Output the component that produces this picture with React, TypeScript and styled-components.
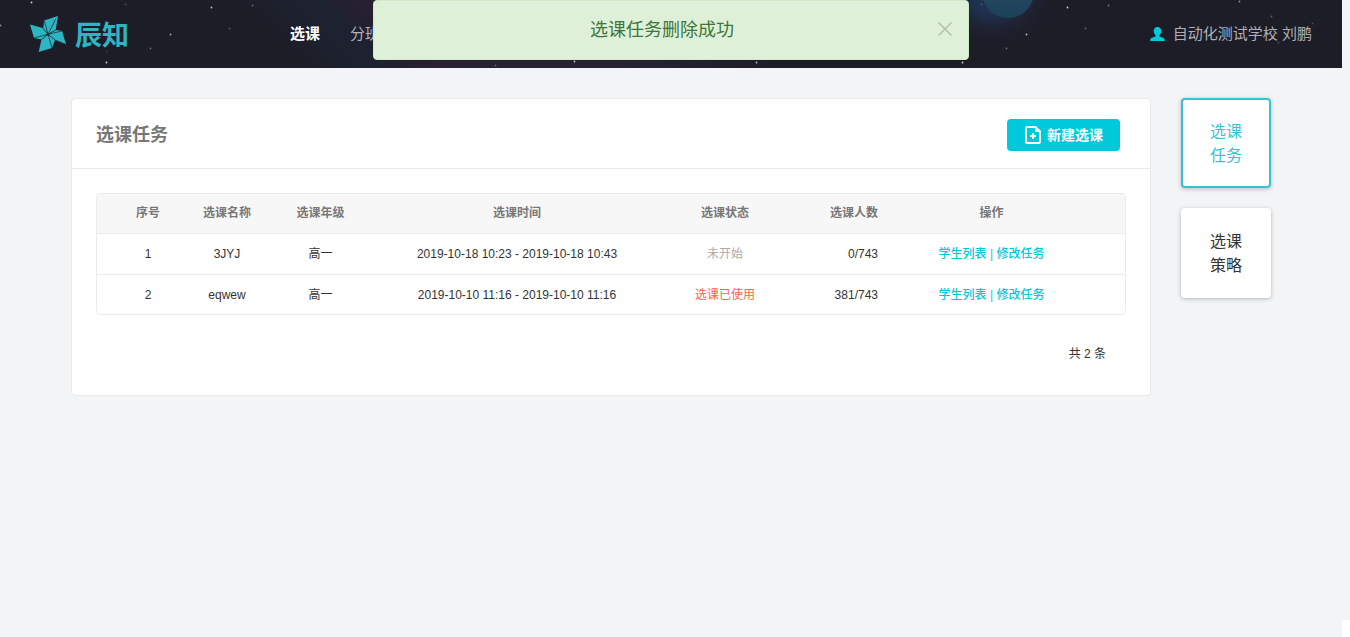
import React, { useState } from "react";
import styled, { createGlobalStyle } from "styled-components";

const GlobalStyle = createGlobalStyle`
  *, *::before, *::after { box-sizing: border-box; }
  body {
    margin: 0;
    background: #f3f4f6;
    color: #333;
    font-family: "Liberation Sans", "Noto Sans CJK SC", sans-serif;
    font-size: 12px;
  }
  button { font-family: inherit; cursor: pointer; }
  a { color: inherit; text-decoration: none; }
`;

const Shell = styled.div`
  position: relative;
  min-height: 100vh;
  padding-right: 8px;
  background: #f3f4f6;
`;

const ScrollCorner = styled.div`
  position: fixed;
  right: 0;
  bottom: 0;
  width: 8px;
  height: 17px;
  background: #fff;
`;

const Header = styled.header`
  position: relative;
  display: flex;
  align-items: center;
  height: 68px;
  padding: 0 30px;
  background: #1d1d28;
  overflow: hidden;
`;

const Sky = styled.svg`
  position: absolute;
  top: 0;
  left: 0;
`;

const Logo = styled.a`
  position: relative;
  display: flex;
  align-items: center;
  gap: 8px;
  width: 260px;
  color: #2db5c2;
`;

const LogoText = styled.span`
  padding-top: 4px;
  font-size: 27px;
  font-weight: 700;
  line-height: 36px;
`;

const Nav = styled.nav`
  position: relative;
  display: flex;
  flex: 1;
  gap: 30px;
`;

const NavLink = styled.a<{ $active?: boolean }>`
  color: ${(p) => (p.$active ? "#fff" : "#b4b4b9")};
  font-size: 15px;
  font-weight: ${(p) => (p.$active ? 700 : 400)};
  line-height: 24px;
`;

const User = styled.a`
  position: relative;
  display: flex;
  align-items: center;
  gap: 8px;
  color: #b0b0b4;
  font-size: 15px;
  line-height: 24px;
`;

const Alert = styled.div`
  position: absolute;
  z-index: 2;
  top: 0;
  left: 0;
  right: 8px;
  display: flex;
  align-items: center;
  gap: 4px;
  width: 596px;
  height: 60px;
  margin: 0 auto;
  padding: 0 16px 2px;
  border: 1px solid #d0e9c6;
  border-radius: 4px;
  background: #dff0d8;
  color: #3c763d;
`;

const AlertText = styled.p`
  flex: 1;
  margin: 0;
  padding-top: 2px;
  font-size: 18px;
  line-height: 26px;
  text-align: center;
`;

const CloseButton = styled.button`
  display: flex;
  width: 14px;
  height: 14px;
  padding: 0;
  border: 0;
  background: none;
  color: #b2c0ad;
`;

const Body = styled.div`
  display: flex;
  align-items: flex-start;
  gap: 30px;
  padding: 30px 71px;
`;

const Card = styled.main`
  flex: 1;
  min-width: 0;
  border: 1px solid #e9eaec;
  border-radius: 4px;
  background: #fff;
`;

const CardHeader = styled.div`
  display: flex;
  align-items: center;
  justify-content: space-between;
  height: 70px;
  padding: 2px 30px 0 24px;
  border-bottom: 1px solid #ebebeb;
`;

const Title = styled.h1`
  margin: 0;
  color: #777;
  font-size: 18px;
  line-height: 26px;
`;

const CreateButton = styled.button`
  display: flex;
  align-items: center;
  gap: 6px;
  height: 32px;
  padding: 0 17px 0 18px;
  border: 0;
  border-radius: 4px;
  background: #00c9dc;
  color: #fff;
  font-size: 14px;
  font-weight: 700;
  line-height: 20px;
`;

const CardBody = styled.div`
  padding: 24px 24px 30px;
`;

const TableFrame = styled.div`
  border: 1px solid #ebebeb;
  border-radius: 4px;
  overflow: hidden;
`;

const Table = styled.table`
  width: 100%;
  table-layout: fixed;
  border-spacing: 0;
  line-height: 18px;

  tbody tr:last-child td {
    height: 39px;
    border-bottom: 0;
  }
`;

type Align = "center" | "right";

const HeadCell = styled.th<{ $align?: Align; $last?: boolean }>`
  height: 40px;
  padding: 0 ${(p) => (p.$last ? "20px" : "0")} 2px 0;
  border-bottom: 1px solid #ebebeb;
  background: #f7f7f7;
  color: #777;
  text-align: ${(p) => p.$align ?? "center"};
`;

const Cell = styled.td<{ $align?: Align; $last?: boolean }>`
  height: 41px;
  padding: 0 ${(p) => (p.$last ? "20px" : "0")} 0 0;
  border-bottom: 1px solid #ebebeb;
  text-align: ${(p) => p.$align ?? "center"};
`;

const Status = styled.span<{ $used: boolean }>`
  color: ${(p) => (p.$used ? "#ff6347" : "#aaa")};
`;

const Actions = styled.span`
  color: #00c9dc;
  font-weight: 500;
`;

const Total = styled.p`
  margin: 30px 20px 0;
  line-height: 18px;
  height: 20px;
  text-align: right;
`;

const Side = styled.aside`
  display: flex;
  flex-direction: column;
  gap: 20px;
`;

const SideButton = styled.button<{ $active?: boolean }>`
  width: 90px;
  height: 90px;
  padding: 2px 24px 0;
  border: 2px solid ${(p) => (p.$active ? "#37c3d2" : "#fff")};
  border-radius: 4px;
  background: #fff;
  box-shadow: 0 1px 4px rgba(0, 0, 0, 0.25);
  color: ${(p) => (p.$active ? "#37c3d2" : "#333")};
  font-size: 16px;
  line-height: 24px;
`;

const stars: [number, number, number][] = [
  [31, 2, 0.8], [125, 4, 0.2], [0, 25, 0.5], [170, 34, 0.6], [150, 48, 0.35],
  [106, 51, 0.15], [106, 62, 0.8], [211, 7, 0.7], [252, 5, 0.35], [229, 28, 0.25],
  [495, 65, 0.3], [574, 61, 0.7], [756, 62, 0.7], [962, 62, 0.8], [981, 4, 0.2],
  [1006, 48, 0.35], [1026, 34, 0.7], [1067, 7, 0.8], [1085, 28, 0.3], [1108, 5, 0.4],
  [1239, 1, 0.5], [1271, 16, 0.3], [1312, 23, 0.2], [1278, 42, 0.2],
];

const NightSky = () => (
  <Sky width="1350" height="68" aria-hidden="true">
    <defs>
      <linearGradient id="nebula" gradientUnits="userSpaceOnUse" x1="240" y1="0" x2="350" y2="-110">
        <stop offset="0" stopColor="#1d2230" stopOpacity="0" />
        <stop offset="0.25" stopColor="#1d2130" />
        <stop offset="0.36" stopColor="#1e2130" />
        <stop offset="0.55" stopColor="#282030" />
        <stop offset="1" stopColor="#272335" />
      </linearGradient>
      <linearGradient id="fade" x1="0" x2="1">
        <stop offset="0" stopColor="#1d1d28" stopOpacity="0" />
        <stop offset="1" stopColor="#1d1d28" />
      </linearGradient>
      <radialGradient id="glow">
        <stop offset="0.3" stopColor="#20365a" stopOpacity="0.8" />
        <stop offset="1" stopColor="#1d1d28" stopOpacity="0" />
      </radialGradient>
      <linearGradient id="planet" x1="0" y1="0" x2="0" y2="1">
        <stop offset="0.4" stopColor="#294767" />
        <stop offset="1" stopColor="#1b4256" />
      </linearGradient>
    </defs>
    <rect x="240" width="530" height="68" fill="url(#nebula)" />
    <rect x="620" width="150" height="68" fill="url(#fade)" />
    <ellipse cx="992" cy="0" rx="62" ry="46" fill="url(#glow)" />
    <circle cx="1008" cy="-8" r="26" fill="url(#planet)" />
    {stars.map(([x, y, opacity]) => (
      <circle key={`${x}-${y}`} cx={x + 0.5} cy={y + 0.5} r="0.9" fill="#fff" opacity={opacity} />
    ))}
  </Sky>
);

const Pinwheel = () => (
  <svg width="37" height="37" viewBox="0 0 37 37" aria-hidden="true">
    <g fill="#2db5c2">
      <path d="M28 0 25.700 14 18 18.300 12.800 12 14 4.500Z" />
      <path d="M25.700 14 32 15 36 28.300 25 24 18 18.300Z" />
      <path d="M25 24 22 32 8.700 36 11.500 23.500 18 18.300Z" />
      <path d="M11.500 23.500 4 22 0 8.500 12.800 12 18 18.300Z" />
    </g>
    <path
      d="M18 18.300 14.300 4.500M18 18.300 25.700 3M18 18.300 25.700 14M18 18.300 32 15M18 18.300 25 24M18 18.300 22 32M18 18.300 11.500 23.500M18 18.300 4 22M18 18.300 12.800 12M12.800 12 14 5M25 24 35 28"
      stroke="#1d3340"
      strokeWidth="0.8"
      fill="none"
    />
    <circle cx="18" cy="18.300" r="1.500" fill="#1d3340" />
  </svg>
);

const UserIcon = () => (
  <svg width="15" height="14" viewBox="0 0 15 14" fill="#00c9dc" aria-hidden="true">
    <path d="M7.500 0C9.900 0 11.300 1.700 11.300 4.100C11.300 5.900 10.500 7.300 9.400 8.200V9.300L13.500 11C14.400 11.400 14.700 12 14.700 13V14H.3V13C.3 12 .6 11.400 1.500 11L5.600 9.300V8.200C4.500 7.300 3.700 5.900 3.700 4.100C3.700 1.700 5.100 0 7.500 0Z" />
  </svg>
);

const NewFileIcon = () => (
  <svg width="16" height="18" viewBox="0 0 16 18" fill="none" stroke="#fff" aria-hidden="true">
    <path d="M2.500 1H10.500L15 5.500V15.500Q15 17 13.500 17H2.500Q1 17 1 15.500V2.500Q1 1 2.500 1Z" strokeWidth="2" />
    <path d="M10.500 1V5.500H15Z" fill="#fff" />
    <path d="M8 7V13M5 10H11" strokeWidth="2" />
  </svg>
);

const columns: { label: string; width: number; align?: Align }[] = [
  { label: "序号", width: 102 },
  { label: "选课名称", width: 56 },
  { label: "选课年级", width: 131 },
  { label: "选课时间", width: 262 },
  { label: "选课状态", width: 154 },
  { label: "选课人数", width: 76, align: "right" },
  { label: "操作", width: 247 },
];

const tasks = [
  { id: 1, name: "3JYJ", grade: "高一", time: "2019-10-18 10:23 - 2019-10-18 10:43", status: "未开始", used: false, count: "0/743" },
  { id: 2, name: "eqwew", grade: "高一", time: "2019-10-10 11:16 - 2019-10-10 11:16", status: "选课已使用", used: true, count: "381/743" },
];

export default function App() {
  const [alertOpen, setAlertOpen] = useState(true);

  return (
    <Shell>
      <GlobalStyle />
      {alertOpen && (
        <Alert role="alert">
          <AlertText>选课任务删除成功</AlertText>
          <CloseButton type="button" aria-label="关闭" onClick={() => setAlertOpen(false)}>
            <svg width="14" height="14" viewBox="0 0 14 14" stroke="currentColor" strokeWidth="1.500" aria-hidden="true">
              <path d="M.5 .5 13.500 13.500M13.500 .5 .5 13.500" />
            </svg>
          </CloseButton>
        </Alert>
      )}
      <Header>
        <NightSky />
        <Logo href="#">
          <Pinwheel />
          <LogoText>辰知</LogoText>
        </Logo>
        <Nav>
          <NavLink href="#" $active>选课</NavLink>
          <NavLink href="#">分班</NavLink>
        </Nav>
        <User href="#">
          <UserIcon />
          自动化测试学校 刘鹏
        </User>
      </Header>
      <Body>
        <Card>
          <CardHeader>
            <Title>选课任务</Title>
            <CreateButton type="button">
              <NewFileIcon />
              新建选课
            </CreateButton>
          </CardHeader>
          <CardBody>
            <TableFrame>
              <Table>
                <colgroup>
                  {columns.map((c) => (
                    <col key={c.label} width={c.width} />
                  ))}
                </colgroup>
                <thead>
                  <tr>
                    {columns.map((c, i) => (
                      <HeadCell key={c.label} scope="col" $align={c.align} $last={i === columns.length - 1}>
                        {c.label}
                      </HeadCell>
                    ))}
                  </tr>
                </thead>
                <tbody>
                  {tasks.map((t) => (
                    <tr key={t.id}>
                      <Cell>{t.id}</Cell>
                      <Cell>{t.name}</Cell>
                      <Cell>{t.grade}</Cell>
                      <Cell>{t.time}</Cell>
                      <Cell><Status $used={t.used}>{t.status}</Status></Cell>
                      <Cell $align="right">{t.count}</Cell>
                      <Cell $last>
                        <Actions>
                          <a href="#">学生列表</a> | <a href="#">修改任务</a>
                        </Actions>
                      </Cell>
                    </tr>
                  ))}
                </tbody>
              </Table>
            </TableFrame>
            <Total>共 2 条</Total>
          </CardBody>
        </Card>
        <Side>
          <SideButton type="button" $active>选课任务</SideButton>
          <SideButton type="button">选课策略</SideButton>
        </Side>
      </Body>
      <ScrollCorner />
    </Shell>
  );
}
